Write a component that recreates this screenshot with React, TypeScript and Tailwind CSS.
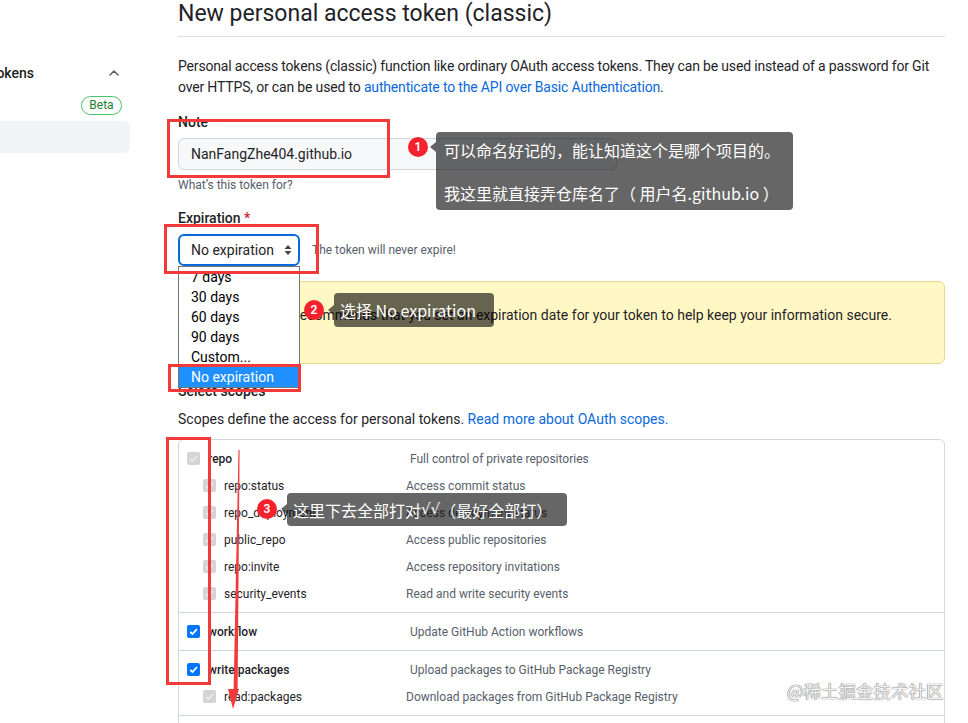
import { ChevronUp } from "lucide-react";
import clsx from "clsx";

type Scope = { name: string; desc: string };
type ScopeGroup = Scope & { on: boolean; children: Scope[] };

const scopeGroups: ScopeGroup[] = [
  {
    name: "repo",
    desc: "Full control of private repositories",
    on: false,
    children: [
      { name: "repo:status", desc: "Access commit status" },
      { name: "repo_deployment", desc: "Access deployment status" },
      { name: "public_repo", desc: "Access public repositories" },
      { name: "repo:invite", desc: "Access repository invitations" },
      { name: "security_events", desc: "Read and write security events" },
    ],
  },
  { name: "workflow", desc: "Update GitHub Action workflows", on: true, children: [] },
  {
    name: "write:packages",
    desc: "Upload packages to GitHub Package Registry",
    on: true,
    children: [{ name: "read:packages", desc: "Download packages from GitHub Package Registry" }],
  },
  {
    name: "delete:packages",
    desc: "Delete packages from GitHub Package Registry",
    on: false,
    children: [],
  },
];

const expirations = ["7 days", "30 days", "60 days", "90 days", "Custom...", "No expiration"];

function Check({ on }: { on: boolean }) {
  return (
    <span
      className={clsx(
        "flex h-[13px] w-[13px] shrink-0 items-center justify-center rounded-[2px]",
        on ? "bg-[#0075ff]" : "bg-[#d4d4d4]"
      )}
    >
      <svg viewBox="0 0 12 12" className="h-[11px] w-[11px]">
        <path
          d="M2.4 6.3 4.9 8.7 9.7 3.5"
          fill="none"
          stroke={on ? "#ffffff" : "#ececec"}
          strokeWidth="1.9"
        />
      </svg>
    </span>
  );
}

function Badge({ n }: { n: number }) {
  return (
    <span className="flex h-5 w-5 items-center justify-center rounded-full bg-[#f5222d] text-xs leading-none font-semibold text-white">
      {n}
    </span>
  );
}

function Sidebar() {
  return (
    <aside className="w-[130px] shrink-0">
      <div className="-ml-[200px] w-[330px] pt-[57px] text-sm">
        <div className="flex h-8 items-center">
          <span className="flex-1 text-right font-medium whitespace-nowrap">Personal access tokens</span>
          <span className="w-[72px]" />
          <ChevronUp className="h-4 w-4 text-[#57606a]" strokeWidth={2.2} />
          <span className="w-2" />
        </div>
        <div className="flex h-8 items-center">
          <span className="flex-1 text-right whitespace-nowrap">Fine-grained tokens</span>
          <span className="w-[90px]" />
          <span className="flex h-[19px] w-[41px] items-center justify-center rounded-full border border-[#4ac26b] text-xs text-[#1a7f37]">
            Beta
          </span>
          <span className="w-2" />
        </div>
        <div className="flex h-8 items-center rounded-md bg-[#f3f4f6]">
          <span className="flex-1 pr-[139px] text-right font-medium whitespace-nowrap">Tokens (classic)</span>
        </div>
      </div>
    </aside>
  );
}

function ScopeRow({ scope, on, child }: { scope: Scope; on: boolean; child?: boolean }) {
  return (
    <div className="flex h-[27px] items-center text-xs">
      <div className={clsx("flex shrink-0 items-center gap-2", child ? "w-[219px] pl-4" : "w-[223px]")}>
        <Check on={on} />
        <span className={clsx(child ? "font-normal" : "font-medium")}>{scope.name}</span>
      </div>
      <span className="text-[#57606a]">{scope.desc}</span>
    </div>
  );
}

function ScopesTable() {
  return (
    <div className="mt-[9px] rounded-md border border-[#d0d7de]">
      {scopeGroups.map((g, i) => (
        <div
          key={g.name}
          className={clsx(
            "py-[5px] pl-2",
            i < scopeGroups.length - 1 && "border-b border-[#d0d7de]"
          )}
        >
          <ScopeRow scope={g} on={g.on} />
          {g.children.map((c) => (
            <ScopeRow key={c.name} scope={c} on={false} child />
          ))}
        </div>
      ))}
    </div>
  );
}

export default function App() {
  return (
    <div className="relative flex h-[723px] w-[968px] overflow-hidden bg-white font-['Roboto',sans-serif] text-[#1f2328]">
      <Sidebar />
      <main className="ml-[48px] w-[767px] shrink-0">
        <h1 className="-mt-px border-b border-[#d8dee4] pb-[7px] text-[23px] leading-[30px] font-normal">
          New personal access token (classic)
        </h1>
        <p className="mt-[19px] text-sm leading-[21px] tracking-[-0.012em]">
          Personal access tokens (classic) function like ordinary OAuth access tokens. They can be used instead of a
          password for Git over HTTPS, or can be used to{" "}
          <a className="text-[#0969da]">authenticate to the API over Basic Authentication</a>.
        </p>

        <div className="mt-[14px] text-sm leading-[21px] font-medium">Note</div>
        <div className="mt-[5px] flex h-8 w-[439px] items-center rounded-md border border-[#d0d7de] bg-[#f6f8fa] px-3 text-sm">
          NanFangZhe404.github.io
        </div>
        <div className="mt-[6px] text-xs leading-[18px] text-[#57606a]">What’s this token for?</div>

        <div className="mt-[14px] text-sm leading-[21px] font-medium">
          Expiration <span className="text-[#cf222e]">*</span>
        </div>
        <div className="mt-[5px] flex items-center gap-3">
          <div className="flex h-8 w-[122px] items-center justify-between rounded-md border-2 border-[#0969da] pr-[6px] pl-[11px] text-sm">
            <span>No expiration</span>
            <svg viewBox="0 0 8 12" className="h-3 w-2 text-[#444]">
              <path d="M4 1 7.5 5H.5zM4 11 .5 7h7z" fill="currentColor" />
            </svg>
          </div>
          <span className="text-xs text-[#57606a]">The token will never expire!</span>
        </div>

        <div className="mt-[15px] h-[83px] rounded-md border border-[#ecd98f] bg-[#fff8c5] px-4 pt-[23px] text-sm leading-[21px]">
          GitHub strongly recommends that you set an expiration date for your token to help keep your information
          secure.
        </div>

        <div className="mt-[17px] text-sm leading-[21px] font-medium">Select scopes</div>
        <p className="mt-[7px] text-sm leading-[21px]">
          Scopes define the access for personal tokens. <a className="text-[#0969da]">Read more about OAuth scopes.</a>
        </p>
        <ScopesTable />
      </main>

      {/* open select list */}
      <ul className="absolute top-[266px] left-[178px] w-[122px] border border-[#767676] bg-white text-sm text-black">
        {expirations.map((e) => (
          <li
            key={e}
            className={clsx("flex h-5 items-center pl-3", e === "No expiration" && "bg-[#1e90ff] text-white")}
          >
            {e}
          </li>
        ))}
      </ul>

      {/* annotation boxes */}
      <div className="absolute top-[119px] left-[167px] h-[59px] w-[223px] border-[3px] border-[#f33a3a]" />
      <div className="absolute top-[224px] left-[164px] h-[50px] w-[155px] border-[3px] border-[#f33a3a]" />
      <div className="absolute top-[364px] left-[168px] h-[28px] w-[133px] border-[3px] border-[#f33a3a]" />
      <div className="absolute top-[437px] left-[166px] h-[248px] w-[45px] border-[3px] border-[#f33a3a]" />
      <svg className="absolute top-0 left-0 h-[723px] w-[968px]" viewBox="0 0 968 723">
        <polygon points="238.5,450 239.6,450 237.6,690 233.6,690" fill="#f33a3a" />
        <polygon points="228,689 239,689 233,709" fill="#f33a3a" />
      </svg>

      {/* callouts */}
      <div className="absolute top-[137px] left-[408px]">
        <Badge n={1} />
      </div>
      <div className="absolute top-[132px] left-[436px] h-[78px] w-[357px] rounded bg-black/60 px-2 font-['Noto_Sans_CJK_SC',sans-serif] text-base text-white">
        <span className="absolute top-[10px] -left-[6px] h-0 w-0 border-y-[5px] border-r-[6px] border-y-transparent border-r-black/60" />
        <div className="mt-[6px] leading-6">可以命名好记的，能让知道这个是哪个项目的。</div>
        <div className="mt-[19px] leading-6">我这里就直接弄仓库名了（ 用户名.github.io ）</div>
      </div>

      <div className="absolute top-[300px] left-[304px]">
        <Badge n={2} />
      </div>
      <div className="absolute top-[293px] left-[334px] flex h-[34px] w-[160px] items-center rounded bg-black/60 pl-[6px] font-['Noto_Sans_CJK_SC',sans-serif] text-base text-white">
        <span className="absolute top-[12px] -left-[6px] h-0 w-0 border-y-[5px] border-r-[6px] border-y-transparent border-r-black/60" />
        选择 No expiration
      </div>

      <div className="absolute top-[499px] left-[257px]">
        <Badge n={3} />
      </div>
      <div className="absolute top-[493px] left-[287px] flex h-[33px] w-[280px] items-center rounded bg-black/60 pl-[6px] font-['Noto_Sans_CJK_SC',sans-serif] text-base text-white">
        <span className="absolute top-[11px] -left-[6px] h-0 w-0 border-y-[5px] border-r-[6px] border-y-transparent border-r-black/60" />
        这里下去全部打对<span className="font-['DejaVu_Sans',sans-serif] text-[15px]">√√</span>（最好全部打）
      </div>

      <div className="absolute top-[679px] left-[787px] font-['Noto_Sans_CJK_SC',sans-serif] text-[17.5px] leading-6 text-[#f4f4f4] [text-shadow:0_0_1px_#666,0_0_1px_#666]">
        @稀土掘金技术社区
      </div>
    </div>
  );
}
